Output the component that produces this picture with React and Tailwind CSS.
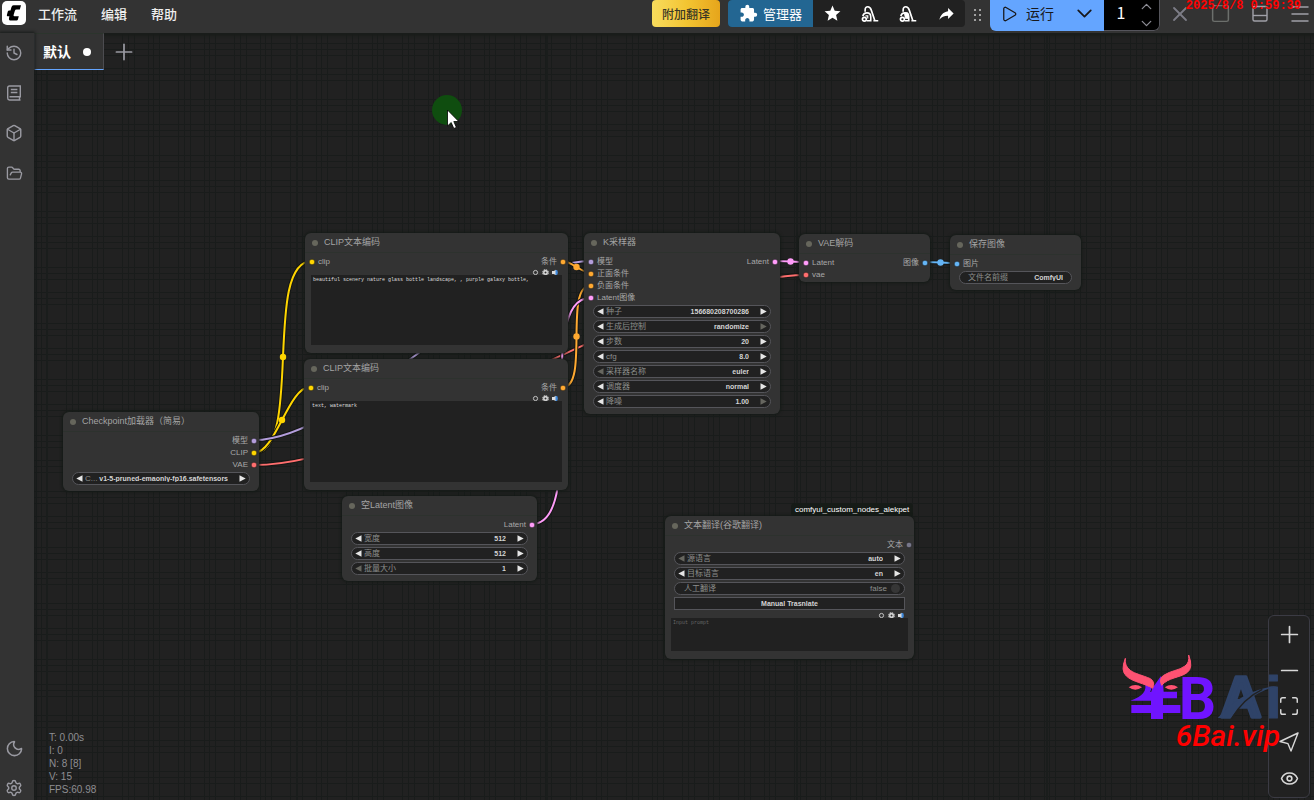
import React, { useState } from 'react'
import { Box, ChevronDown, ChevronUp, FolderOpen, History, Maximize, Menu, Minus, Moon, Play, Plus, Settings, Eye, X, Square } from 'lucide-react'
import { MdExtension, MdReply, MdStar } from 'react-icons/md'

const COLORS = {
  clip: '#ffd500',
  model: '#b39ddb',
  vae: '#ff6e6e',
  cond: '#ffa931',
  latent: '#ff9cf9',
  image: '#64b5f6',
  text: '#77778a'
}

// [x1, y1, x2, y2, type, dot in the middle]
const LINKS = [
  [254, 453, 312, 261, 'clip', true],
  [254, 453, 310, 387, 'clip', true],
  [254, 465, 806, 275, 'vae', false],
  [254, 440, 590, 261, 'model', false],
  [563, 261, 590, 273, 'cond', true],
  [563, 387, 590, 286, 'cond', true],
  [532, 524, 590, 298, 'latent', false],
  [775, 261, 806, 262, 'latent', true],
  [925, 262, 956, 263, 'image', true]
]

const linkPath = ([x1, y1, x2, y2]) => {
  const d = Math.hypot(x2 - x1, y2 - y1) / 4
  return `M${x1} ${y1}C${x1 + d} ${y1} ${x2 - d} ${y2} ${x2} ${y2}`
}

const Links = () => (
  <svg className="absolute inset-0 h-full w-full">
    <defs>
      <pattern id="grid" width="56" height="56" patternUnits="userSpaceOnUse">
        <path
          d="M10.5 0v56M16.5 0v56M22.5 0v56M36.5 0v56M41.5 0v56M47.5 0v56M0 12.5h56M0 18.5h56M0 24.5h56M0 43.5h56M0 49.5h56M0 55.5h56"
          stroke="#191c1b"
        />
      </pattern>
    </defs>
    <rect width="100%" height="100%" fill="url(#grid)" />
    <path d="M47 0V2000M297 0V2000M547 0V2000M797 0V2000M1047 0V2000" stroke="#1a1d1c" strokeWidth="2" />
    {LINKS.map((l, i) => (
      <g key={i} fill="none">
        <path d={linkPath(l)} stroke="#141614" strokeWidth="4" />
        <path d={linkPath(l)} stroke={COLORS[l[4]]} strokeWidth="2" />
        {l[5] && <circle cx={(l[0] + l[2]) / 2} cy={(l[1] + l[3]) / 2} r="3.2" fill={COLORS[l[4]]} />}
      </g>
    ))}
  </svg>
)

const Dot = ({ type }) => (
  <svg className="h-[6px] w-[6px] shrink-0 overflow-visible" viewBox="0 0 6 6">
    <circle cx="3" cy="3" r="2.8" fill={COLORS[type]} stroke="#1c1c1c" strokeWidth=".6" />
  </svg>
)

const Node = ({ title, className, inputs = [], outputs = [], children }) => (
  <section className={'absolute rounded-md bg-[#333333] shadow-[0_0_3px_1px_#141a16] ' + className}>
    <h2 className="flex h-[20px] items-center gap-[6px] border-b border-[#2d322e] pl-[7px] text-[9px] leading-none font-normal text-[#a3a3a3]">
      <span className="h-[6px] w-[6px] rounded-full bg-[#66665c]"></span>
      {title}
    </h2>
    <div className="flex justify-between pt-[3px] pr-[2px] pb-px pl-[4px] text-[8px] leading-[12px] text-[#a8a8a8]">
      <ul>
        {inputs.map(([name, type]) => (
          <li key={name} className="flex h-[12px] items-center gap-[3px]"><Dot type={type} />{name}</li>
        ))}
      </ul>
      <ul>
        {outputs.map(([name, type]) => (
          <li key={name} className="flex h-[12px] items-center justify-end gap-[3px]">{name}<Dot type={type} /></li>
        ))}
      </ul>
    </div>
    {children}
  </section>
)

const Widgets = ({ children }) => <div className="flex flex-col gap-[2px] px-[9px] pb-[6px]">{children}</div>

const Arrow = ({ right, off, label }) => (
  <button type="button" aria-label={label} className={off ? 'shrink-0 text-[#66665f]' : 'shrink-0 text-[#e6e6e6]'}>
    <svg className="h-[7px] w-[7px]" viewBox="0 0 7 7">
      <path d={right ? 'M.5 .3v6.4L6.7 3.5z' : 'M6.5 .3v6.4L.3 3.5z'} fill="currentColor" />
    </svg>
  </button>
)

const Pill = ({ children }) => (
  <div className="flex h-[13px] items-center rounded-full border border-[#55555a] bg-[#212121] text-[8px] leading-none">
    {children}
  </div>
)

const Widget = ({ id, label, value, combo, min, max }) => (
  <Pill>
    <div className="flex min-w-0 flex-1 items-center px-[3px]">
      <Arrow off={min} label={label + ' -'} />
      <label htmlFor={id} className="ml-[2px] shrink-0 text-[#8d8f8d]">{label}</label>
      {combo ? (
        <select id={id} className="mr-[11px] min-w-0 flex-1 appearance-none bg-transparent text-[7px] font-bold text-[#d4d4d4] [text-align-last:right]">
          <option>{value}</option>
        </select>
      ) : (
        <input id={id} defaultValue={value} className="mr-[11px] min-w-0 flex-1 bg-transparent text-right text-[7px] font-bold text-[#d4d4d4]" />
      )}
      <Arrow right off={max} label={label + ' +'} />
    </div>
  </Pill>
)

const PromptTools = () => (
  <svg className="h-[7px] w-[26px] shrink-0" viewBox="0 0 26 7">
    <circle cx="3.5" cy="3.5" r="2.1" fill="none" stroke="#d0d0d0" strokeWidth=".9" />
    <circle cx="13.5" cy="3.5" r="2.7" fill="none" stroke="#dddddd" strokeWidth="1.1" strokeDasharray="1.5 .6" />
    <circle cx="13.5" cy="3.5" r="1.7" fill="none" stroke="#dddddd" strokeWidth="1.4" />
    <path d="M20 2h1.800L24 .8v5.400L21.800 5H20z" fill="#dddddd" />
    <path d="M23.500 1h1.600q1.400 2.500 0 5h-1.600z" fill="#3f87d8" />
  </svg>
)

const Prompt = ({ label, className, ...props }) => (
  <div className="flex flex-col px-[6px] pb-2">
    <div className="flex h-[6px] justify-end pr-1"><PromptTools /></div>
    <textarea
      aria-label={label}
      spellCheck={false}
      className={"block w-full resize-none bg-[#212121] p-[2px] font-['Liberation_Mono',monospace] text-[5px] leading-[6px] text-[#dddddd] placeholder:text-[#666666] " + className}
      {...props}
    />
  </div>
)

const Vacuum = ({ solid }) => (
  <svg className="h-[18px] w-[18px]" viewBox="0 0 24 24" fill="none" stroke="currentColor" strokeWidth="2.2">
    <path d="M5.500 9V6.500C5.500 3.500 7 2.300 9 2.300c2.500 0 3.800 1.700 4.600 4.200L18.500 21M16.500 21H23" />
    <path d="M2.500 15c.5-3 2.500-4.500 5.500-4.500 3.500 0 5 2.500 5 5.500v5H7.500" />
    {solid && <path d="M7 10.500h5V18H8.500z" fill="currentColor" strokeWidth="1" />}
    <circle cx="4.500" cy="19" r="2.600" />
    {!solid && <path d="M6 14.500h3V18" strokeWidth="1.600" />}
  </svg>
)

const BookIcon = () => (
  <svg className="h-4 w-4" viewBox="0 0 16 16" fill="none" stroke="currentColor" strokeWidth="1.4">
    <path d="M14.500 15H3.500A2 2 0 0 1 1.700 13V2.800Q1.700 1 3.500 1H14.300v10.700H3.500M13.500 11.700V15M4.800 4.500h6.600M4.800 7.500h6.600" />
  </svg>
)

const Header = () => {
  const [count, setCount] = useState(1)
  return (
    <header className="relative flex h-[33px] shrink-0 items-start bg-[#333333] font-['Noto_Sans_CJK_SC',sans-serif] text-[13px] text-[#eeeeee] shadow-[0_1px_2px_2px_#191c1a]">
      <a href="#" aria-label="ComfyUI" className="mt-px ml-[2px]">
        <svg className="h-6 w-6" viewBox="0 0 24 24">
          <rect width="24" height="24" rx="5" fill="#fff" />
          <path d="M11.500 4.200H19l-1.200 4.400h-3.300q-1.300 0-1.700 1.300l-1.200 4.200q-.3 1.200.9 1.200h4.300l-.9 3.300q-.3 1-1.300 1H9q-2.500 0-2-2.300l.4-2H5.600q-1 0-.7-1.200l.9-3.500q.3-1.100 1.400-1.100h1.300l.9-3.200q.5-2.100 2.100-2.100z" fill="#000" />
        </svg>
      </a>
      <nav className="flex h-7 items-center gap-6 pl-3 font-medium">
        <button type="button">工作流</button>
        <button type="button">编辑</button>
        <button type="button">帮助</button>
      </nav>
      <div className="ml-auto flex items-start">
        <button type="button" className="mr-2 h-[27px] w-[68px] rounded bg-linear-to-r from-[#f8dc5c] via-[#f3c532] to-[#e6a51b] text-[12px] font-medium text-[#3a3826]">附加翻译</button>
        <div className="flex h-[27px] overflow-hidden rounded bg-[#212121] text-white">
          <button type="button" className="flex w-[85px] items-center justify-center gap-[5px] bg-[#236692]">
            <MdExtension className="h-[19px] w-[19px]" />管理器
          </button>
          <button type="button" aria-label="star" className="flex w-[38px] items-center justify-center"><MdStar className="h-[19px] w-[19px]" /></button>
          <button type="button" aria-label="unload" className="flex w-[38px] items-center justify-center"><Vacuum /></button>
          <button type="button" aria-label="free" className="flex w-[38px] items-center justify-center"><Vacuum solid /></button>
          <button type="button" aria-label="share" className="flex w-[38px] items-center justify-center"><MdReply className="h-[19px] w-[19px] -scale-x-100" /></button>
        </div>
        <svg className="mx-[9px] h-[27px] w-[7px]" viewBox="0 0 7 27" fill="#a0a0a0">
          <path d="M0 9h2v2H0zM5 9h2v2H5zM0 14h2v2H0zM5 14h2v2H5zM0 19h2v2H0zM5 19h2v2H5z" />
        </svg>
        <div className="flex h-[31px] overflow-hidden rounded-b-md">
          <button type="button" className="flex w-[74px] items-center gap-2 bg-[#64a5ff] pb-1 pl-[10px] text-[14px] text-[#18181b]">
            <Play size={18} strokeWidth={1.7} />运行
          </button>
          <button type="button" aria-label="queue mode" className="flex w-10 items-center justify-center bg-[#64a5ff] pb-1 text-[#18181b]"><ChevronDown size={25} strokeWidth={1.7} /></button>
          <div className="flex w-14 items-center rounded-br-md border-r border-b border-[#55555c] bg-black">
            <input
              aria-label="batch count"
              value={count}
              onChange={e => setCount(e.target.value)}
              className="w-[34px] bg-transparent pb-[6px] text-center text-[16px] text-white"
            />
            <div className="flex flex-col text-[#8d8d96]">
              <button type="button" aria-label="more" onClick={() => setCount(+count + 1)}><ChevronUp size={17} strokeWidth={1.8} /></button>
              <button type="button" aria-label="less" onClick={() => setCount(Math.max(1, count - 1))}><ChevronDown size={17} strokeWidth={1.8} /></button>
            </div>
          </div>
        </div>
        <div className="flex h-[27px] items-center gap-4 pr-[2px] pl-2 text-[#7c7c86]">
          <button type="button" aria-label="cancel"><X size={24} strokeWidth={1.8} /></button>
          <button type="button" aria-label="clear" className="flex w-6 justify-center"><Square size={21} strokeWidth={1.7} className="text-[#6c6f6c]" /></button>
          <button type="button" aria-label="panel" className="flex w-6 justify-center">
            <svg className="h-[18px] w-[18px]" viewBox="0 0 18 18" fill="none" stroke="#a0a0a8" strokeWidth="1.4">
              <rect x="2" y="1.500" width="14" height="14.500" rx="1.500" />
              <path d="M2 10.500h14" />
            </svg>
          </button>
          <button type="button" aria-label="menu"><Menu size={24} strokeWidth={1.5} className="text-[#a0a0a8]" /></button>
        </div>
      </div>
      <time className="absolute top-0 right-[13px] font-['Liberation_Mono',monospace] text-[12px] leading-[12px] font-bold text-[#ff0000]">2025/8/8 0:59:39</time>
    </header>
  )
}

const SideButton = ({ label, children }) => (
  <button type="button" aria-label={label} className="flex h-10 w-7 items-center justify-center">{children}</button>
)

const Sidebar = () => (
  <aside className="relative flex w-[34px] shrink-0 flex-col bg-[#333333] text-[#9a9aa2] shadow-[0_0_3px_1px_#161a18]">
    <SideButton label="历史"><History size={18} strokeWidth={1.9} /></SideButton>
    <SideButton label="节点库"><BookIcon /></SideButton>
    <SideButton label="模型库"><Box size={18} strokeWidth={1.9} /></SideButton>
    <SideButton label="工作流"><FolderOpen size={17} strokeWidth={1.9} /></SideButton>
    <div className="mt-auto -mb-2">
      <SideButton label="主题"><Moon size={19} strokeWidth={1.9} /></SideButton>
      <SideButton label="设置"><Settings size={18} strokeWidth={1.9} /></SideButton>
    </div>
  </aside>
)

const Logo = () => (
  <svg className="h-[66px] w-[160px] overflow-visible" viewBox="68 162 480 198">
    <path d="M133 246Q148 248 155 266L182 228Q190 250 190 275H230V295H188V315H240V339H188V357H152V339H93V315H152V302H90Q146 284 133 246z" fill="#7014ff" />
    <path d="M156 262l-5 14" stroke="#212121" strokeWidth="3" />
    <path d="M75 175Q60 212 78 228C96 246 134 250 157 265Q166 246 150 236C128 226 104 222 90 211Q72 198 75 175zM265 165Q280 204 260 218C238 234 204 232 184 256Q174 236 190 226C212 211 236 212 254 198Q268 188 265 165z" fill="#ff5272" stroke="#ff5272" strokeWidth="3" strokeLinejoin="round" />
    <path d="M85 262Q105 248 125 262Q105 276 85 262zM193 262Q213 248 233 262Q213 276 193 262z" fill="#ff5272" />
    <g fontWeight="700" strokeLinejoin="round">
      <text x="235" y="357" fontFamily="Roboto, sans-serif" fontSize="176" fill="#7014ff">B</text>
      <g fontFamily="Liberation Sans, sans-serif" fill="#2f4368" stroke="#2f4368">
        <text x="360" y="350" fontSize="172" strokeWidth="10">A</text>
        <text x="495" y="354" fontSize="176" strokeWidth="3">i</text>
      </g>
    </g>
    <path d="M352 354Q425 268 532 257Q440 282 392 354z" fill="#2f4368" />
    <path d="M394 356Q428 296 486 268" fill="none" stroke="#212121" strokeWidth="4" />
  </svg>
)

const App = () => (
  <div className="relative flex h-screen flex-col overflow-hidden bg-[#212121] font-['Liberation_Sans','Noto_Sans_CJK_SC',sans-serif]">
    <main className="absolute inset-0">
      <Links />
      <Node title="Checkpoint加载器（简易）" className="top-[412px] left-[63px] w-[196px]" outputs={[['模型', 'model'], ['CLIP', 'clip'], ['VAE', 'vae']]}>
        <Widgets>
          <Widget id="ckpt" label="C..." value="v1-5-pruned-emaonly-fp16.safetensors" combo />
        </Widgets>
      </Node>
      <Node title="CLIP文本编码" className="top-[233px] left-[305px] w-[263px]" inputs={[['clip', 'clip']]} outputs={[['条件', 'cond']]}>
        <Prompt label="正面" className="h-[70px]" defaultValue="beautiful scenery nature glass bottle landscape, , purple galaxy bottle," />
      </Node>
      <Node title="CLIP文本编码" className="top-[359px] left-[304px] w-[264px]" inputs={[['clip', 'clip']]} outputs={[['条件', 'cond']]}>
        <Prompt label="负面" className="h-[81px]" defaultValue="text, watermark" />
      </Node>
      <Node
        title="K采样器"
        className="top-[233px] left-[584px] w-[196px]"
        inputs={[['模型', 'model'], ['正面条件', 'cond'], ['负面条件', 'cond'], ['Latent图像', 'latent']]}
        outputs={[['Latent', 'latent']]}
      >
        <Widgets>
          <Widget id="seed" label="种子" value="156680208700286" />
          <Widget id="control" label="生成后控制" value="randomize" combo max />
          <Widget id="steps" label="步数" value="20" />
          <Widget id="cfg" label="cfg" value="8.0" />
          <Widget id="sampler" label="采样器名称" value="euler" combo min />
          <Widget id="scheduler" label="调度器" value="normal" combo />
          <Widget id="denoise" label="降噪" value="1.00" max />
        </Widgets>
      </Node>
      <Node title="VAE解码" className="top-[234px] left-[799px] w-[131px]" inputs={[['Latent', 'latent'], ['vae', 'vae']]} outputs={[['图像', 'image']]} />
      <Node title="保存图像" className="top-[235px] left-[950px] w-[131px]" inputs={[['图片', 'image']]}>
        <Widgets>
          <Pill>
            <label htmlFor="prefix" className="shrink-0 pl-2 text-[#8d8f8d]">文件名前缀</label>
            <input id="prefix" defaultValue="ComfyUI" className="mr-2 min-w-0 flex-1 bg-transparent text-right text-[7px] font-bold text-[#d4d4d4]" />
          </Pill>
        </Widgets>
      </Node>
      <Node title="空Latent图像" className="top-[496px] left-[342px] w-[195px]" outputs={[['Latent', 'latent']]}>
        <Widgets>
          <Widget id="width" label="宽度" value="512" />
          <Widget id="height" label="高度" value="512" />
          <Widget id="batch" label="批量大小" value="1" min />
        </Widgets>
      </Node>
      <span className="absolute top-[503px] left-[791px] rounded bg-[#161b17] px-1 text-[8px] leading-[14px] text-[#ffffff]">comfyui_custom_nodes_alekpet</span>
      <Node title="文本翻译(谷歌翻译)" className="top-[516px] left-[665px] w-[249px]" outputs={[['文本', 'text']]}>
        <div className="flex flex-col gap-[2px] px-[9px]">
          <Widget id="from" label="源语言" value="auto" combo min />
          <Widget id="to" label="目标语言" value="en" combo />
          <Pill>
            <label htmlFor="manual" className="flex flex-1 items-center justify-between pr-1 pl-[9px] text-[#8d8f8d]">人工翻译<span>false</span></label>
            <input id="manual" type="checkbox" className="mr-1 h-[9px] w-[9px] appearance-none rounded-full bg-[#363636]" />
          </Pill>
          <button type="button" className="h-[13px] border border-[#55555a] bg-[#212121] text-[7px] leading-none font-bold text-[#d4d4d4]">Manual Trasnlate</button>
        </div>
        <div className="pt-[2px]">
          <Prompt label="翻译" className="h-[33px]" placeholder="Input prompt" />
        </div>
      </Node>
      <svg className="absolute top-[95px] left-[432px] h-[36px] w-[30px]" viewBox="0 0 30 36">
        <circle cx="15" cy="15" r="15" fill="#0f4d0f" />
        <path d="M15.500 15v16l3.700-3.500 2.600 6 2.600-1.100-2.600-5.900h5z" fill="#fff" stroke="#000" strokeWidth=".8" />
      </svg>
    </main>
    <Header />
    <div className="pointer-events-none relative flex min-h-0 flex-1">
      <Sidebar />
      <div className="flex min-w-0 flex-1 flex-col justify-between">
        <div className="flex items-center gap-[7px]">
          <button type="button" className="flex h-[37px] w-[70px] items-center justify-between border border-b-[#64a5ff] border-x-[#4c4c50] border-t-[#2c352d] bg-[#333333] pr-3 pl-2 font-['Noto_Sans_CJK_SC',sans-serif] text-[14px] font-bold text-white">
            默认
            <span className="h-2 w-2 rounded-full bg-white"></span>
          </button>
          <button type="button" aria-label="新建" className="text-[#9a9aa2]"><Plus size={26} strokeWidth={1.6} /></button>
        </div>
        <div className="flex items-end justify-between">
          <div className="pb-1 pl-[15px] text-[10px] leading-[13px] text-[#8e8e92]">
            <p>T: 0.00s</p>
            <p>I: 0</p>
            <p>N: 8 [8]</p>
            <p>V: 15</p>
            <p>FPS:60.98</p>
          </div>
          <div className="relative mr-1 mb-[2px] flex h-[183px] w-[42px] flex-col items-center rounded-md border border-[#3b3b44] bg-[#212121] text-[#d8d8d8] *:flex *:h-9 *:items-center">
            <button type="button" aria-label="放大"><Plus size={27} strokeWidth={1.5} /></button>
            <button type="button" aria-label="缩小"><Minus size={27} strokeWidth={1.5} /></button>
            <button type="button" aria-label="适应视图"><Maximize size={22} strokeWidth={1.6} /></button>
            <button type="button" aria-label="选择">
              <svg className="h-[20px] w-[20px]" viewBox="0 0 20 20" fill="none" stroke="currentColor" strokeWidth="1.400" strokeLinejoin="round">
                <path d="M19 1L1 9.500l8 2.200L12 19z" />
              </svg>
            </button>
            <button type="button" aria-label="显示连线"><Eye size={19} /></button>
          </div>
        </div>
      </div>
    </div>
    <div className="pointer-events-none absolute right-[31px] bottom-[50px] flex flex-col items-end">
      <Logo />
      <span className="mt-[2px] pr-[3px] font-['Roboto',sans-serif] text-[30px] leading-[28px] font-medium text-[#ff0000] italic">6Bai.vip</span>
    </div>
  </div>
)

export default App
